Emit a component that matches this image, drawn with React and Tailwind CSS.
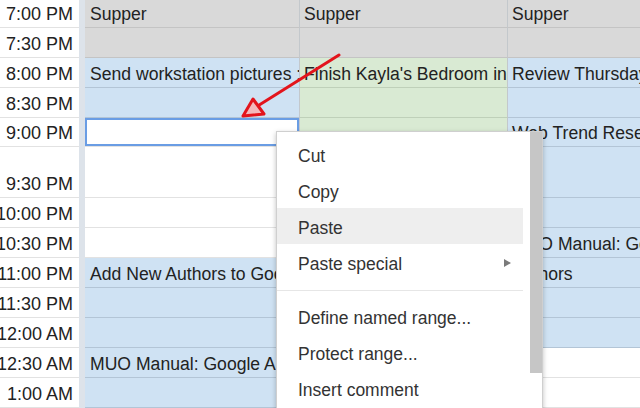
import React from "react";

const FONT = { fontFamily: '"Liberation Sans", Arial, sans-serif' };

const STYLES = {
  gray: "bg-[#d9d9d9] border-b-[#c4c4c4]",
  blue: "bg-[#cfe2f3] border-b-[#b3c5d6]",
  green: "bg-[#d9ead3] border-b-[#bfd0b9]",
  white: "bg-white border-b-[#e2e2e2]",
};

const rows = [
  { t: "7:00 PM", h: 28, c: [["gray", "Supper"], ["gray", "Supper"], ["gray", "Supper"]] },
  { t: "7:30 PM", h: 30, c: [["gray", ""], ["gray", ""], ["gray", ""]] },
  { t: "8:00 PM", h: 30, c: [["blue", "Send workstation pictures :"], ["green", "Finish Kayla's Bedroom in"], ["blue", "Review Thursday"]] },
  { t: "8:30 PM", h: 30, c: [["blue", ""], ["green", ""], ["blue", ""]] },
  { t: "9:00 PM", h: 29, sel: true, c: [["white", ""], ["green", ""], ["blue", "Web Trend Research"]] },
  { t: "9:30 PM", h: 51, c: [["white", ""], ["green", ""], ["blue", ""]] },
  { t: "10:00 PM", h: 30, c: [["white", ""], ["green", ""], ["blue", ""]] },
  { t: "10:30 PM", h: 30, c: [["white", ""], ["green", ""], ["blue", "MUO Manual: Google"]] },
  { t: "11:00 PM", h: 30, c: [["blue", "Add New Authors to Google"], ["green", ""], ["blue", "Authors"]] },
  { t: "11:30 PM", h: 30, c: [["blue", ""], ["green", ""], ["blue", ""]] },
  { t: "12:00 AM", h: 30, c: [["blue", ""], ["green", ""], ["blue", ""]] },
  { t: "12:30 AM", h: 30, c: [["blue", "MUO Manual: Google Apps"], ["green", ""], ["white", ""]] },
  { t: "1:00 AM", h: 30, c: [["blue", ""], ["green", ""], ["white", ""]] },
];

const WIDTHS = ["w-[215px] pl-[5px]", "w-[208px] pl-[4px]", "flex-1 pl-[4px]"];

function Row({ r }) {
  return (
    <div className="flex" style={{ height: r.h }}>
      <div className="w-[79px] shrink-0 flex items-end justify-end pr-[6px] pb-[2px] border-b border-b-[#e2e2e2] bg-white overflow-hidden whitespace-nowrap">
        <span className="leading-[21px]">{r.t}</span>
      </div>
      <div className="w-[6px] shrink-0 bg-[#dde3ea]" />
      {r.c.map(([kind, text], i) => (
        <div
          key={i}
          className={`${WIDTHS[i]} shrink-0 flex items-end pb-[2px] border-b border-r border-r-[#c3c8cc] overflow-hidden whitespace-nowrap text-[17.6px] ${STYLES[kind]} ${
            r.sel && i === 0 ? "shadow-[inset_0_0_0_2px_#6a9de4]" : ""
          }`}
        >
          <span className="leading-[21px]">{text}</span>
        </div>
      ))}
    </div>
  );
}

function Item({ label, active, sub }) {
  return (
    <div
      className={`h-[36px] flex items-center pt-[3px] pl-[21px] pr-[12px] ${active ? "bg-[#eeeeee]" : ""}`}
    >
      <span className="flex-1 leading-[20px]">{label}</span>
      {sub && (
        <svg width="7" height="8" viewBox="0 0 7 8" className="mt-[-2px]">
          <polygon points="0,0 7,4 0,8" fill="#7a7a7a" />
        </svg>
      )}
    </div>
  );
}

export default function App() {
  return (
    <div
      className="relative w-[640px] h-[408px] overflow-hidden bg-white text-[18px] text-[#222]"
      style={FONT}
    >
      <div className="flex flex-col w-[700px]">
        {rows.map((r, i) => (
          <Row key={i} r={r} />
        ))}
      </div>

      {/* context menu */}
      <div className="absolute left-[276px] top-[131px] w-[267px] h-[290px] bg-white border border-[#cfcfcf] shadow-[0_2px_5px_rgba(0,0,0,0.25)] flex text-[17.5px] text-[#333]">
        <div className="w-[246px] pt-[4px]">
          <Item label="Cut" />
          <Item label="Copy" />
          <Item label="Paste" active />
          <Item label="Paste special" sub />
          <div className="pt-[10px] pb-[7px]">
            <div className="border-t border-t-[#e6e6e6]" />
          </div>
          <Item label="Define named range..." />
          <Item label="Protect range..." />
          <Item label="Insert comment" />
        </div>
        <div className="w-[7px]" />
        <div className="w-[12px]">
          <div className="h-[241px] bg-[#c6c6c6]" />
        </div>
      </div>

      {/* red arrow annotation */}
      <svg className="absolute left-0 top-0 pointer-events-none" width="640" height="408" viewBox="0 0 640 408">
        <line x1="339" y1="55" x2="256" y2="107" stroke="#e3141c" strokeWidth="3" strokeLinecap="round" />
        <polygon
          points="243,116 253,99 264,114"
          fill="#f3b8bb"
          stroke="#e3141c"
          strokeWidth="3"
          strokeLinejoin="round"
        />
      </svg>
    </div>
  );
}
